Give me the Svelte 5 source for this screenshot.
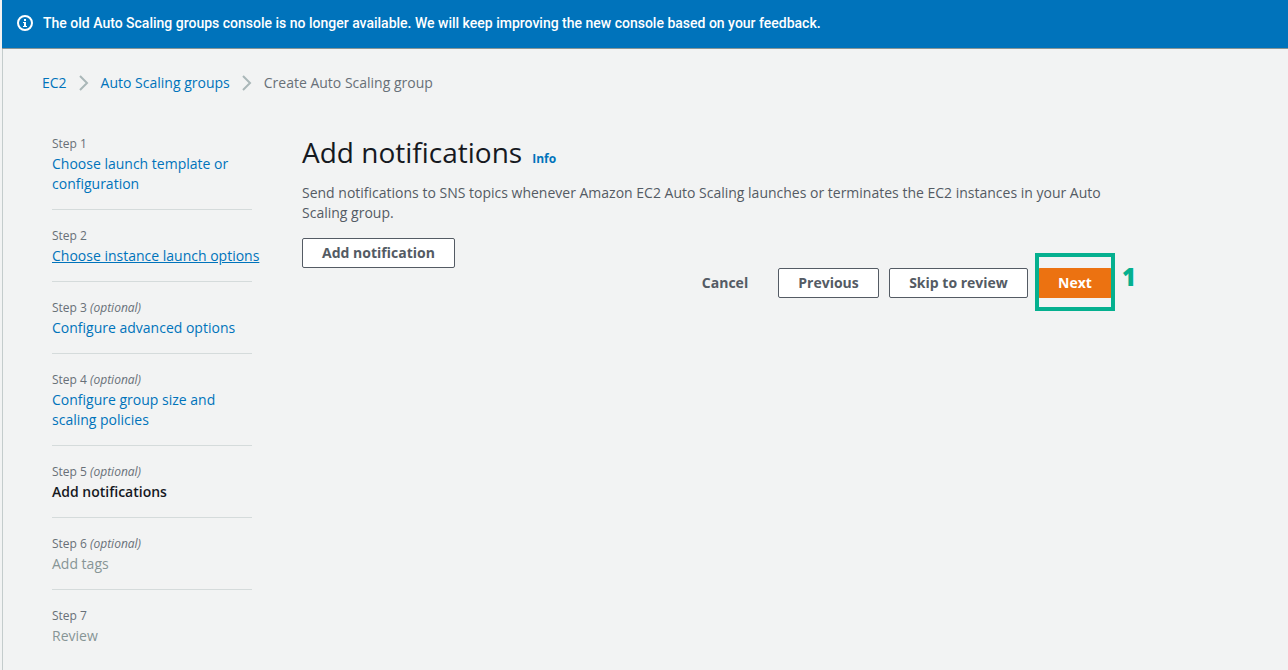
<script>
  const steps = [
    { label: 'Step 1', title: 'Choose launch template or configuration', state: 'link' },
    { label: 'Step 2', title: 'Choose instance launch options', state: 'link hovered' },
    { label: 'Step 3', optional: true, title: 'Configure advanced options', state: 'link' },
    { label: 'Step 4', optional: true, title: 'Configure group size and scaling policies', state: 'link' },
    { label: 'Step 5', optional: true, title: 'Add notifications', state: 'current' },
    { label: 'Step 6', optional: true, title: 'Add tags', state: 'disabled' },
    { label: 'Step 7', title: 'Review', state: 'disabled' }
  ];
</script>

{#snippet chevron()}
  <svg class="chevron" width="10" height="16" viewBox="0 0 10 16" aria-hidden="true">
    <path d="M1 1l7 7-7 7" fill="none" stroke="#aab7b8" stroke-width="2" />
  </svg>
{/snippet}

<div class="page">
  <div class="banner" role="status">
    <svg width="16" height="16" viewBox="0 0 16 16" aria-hidden="true">
      <circle cx="8" cy="8" r="7" fill="none" stroke="#fff" stroke-width="2" />
      <path d="M7 4h2v2H7zM6 7h3v4h1v1H6v-1h1V8H6z" fill="#fff" />
    </svg>
    <span>The old Auto Scaling groups console is no longer available. We will keep improving the new console based on your feedback.</span>
  </div>

  <div class="body">
    <nav class="crumbs" aria-label="Breadcrumbs">
      <a href="#ec2">EC2</a>
      {@render chevron()}
      <a href="#groups">Auto Scaling groups</a>
      {@render chevron()}
      <span>Create Auto Scaling group</span>
    </nav>

    <div class="wizard">
      <nav class="steps" aria-label="Steps">
        <ol>
          {#each steps as step}
            <li>
              <div class="label">{step.label}{#if step.optional}{' '}<i>(optional)</i>{/if}</div>
              {#if step.state.startsWith('link')}
                <a href="#step" class={step.state}>{step.title}</a>
              {:else}
                <span class={step.state}>{step.title}</span>
              {/if}
            </li>
          {/each}
        </ol>
      </nav>

      <main>
        <header>
          <h1>Add notifications</h1>
          <a class="info" href="#info">Info</a>
        </header>
        <p>Send notifications to SNS topics whenever Amazon EC2 Auto Scaling launches or terminates the EC2 instances in your Auto Scaling group.</p>
        <button class="add" type="button">Add notification</button>
        <div class="actions">
          <button class="cancel" type="button">Cancel</button>
          <button class="previous" type="button">Previous</button>
          <button class="skip" type="button">Skip to review</button>
          <div class="marked">
            <button class="next" type="button">Next</button>
            <div class="frame"></div>
            <span class="number">1</span>
          </div>
        </div>
      </main>
    </div>
  </div>
</div>

<style>
  :global(body) {
    margin: 0;
    background: #f2f3f3;
  }
  .page {
    box-sizing: border-box;
    min-height: 100vh;
    padding-left: 2px;
    display: flex;
    flex-direction: column;
    background: #f2f3f3;
    color: #545b64;
    font: 14px/20px "Open Sans", "Noto Sans", sans-serif;
  }
  a {
    color: #0073bb;
    text-decoration: none;
  }
  a:hover {
    text-decoration: underline;
  }
  .banner {
    display: flex;
    align-items: center;
    gap: 10px;
    padding: 13px 15px 15px;
    background: #0073bb;
    border-bottom: 1px solid #879596;
    color: #fff;
    font-family: Roboto, sans-serif;
    font-weight: 500;
  }
  .banner svg {
    flex: none;
  }
  .body {
    flex: 1;
    padding: 24px 39px 0;
    border-left: 1px solid #c4cccc;
  }
  .crumbs {
    display: flex;
    align-items: center;
    gap: 12px;
    color: #687078;
  }
  .wizard {
    display: flex;
    gap: 50px;
    padding: 41px 10px 0;
  }
  .steps {
    flex: 0 0 200px;
    min-width: 0;
  }
  ol {
    margin: 0;
    padding: 0;
    list-style: none;
  }
  li {
    padding-bottom: 15px;
  }
  li + li {
    padding-top: 16px;
    border-top: 1px solid #d5dbdb;
  }
  li:last-child {
    padding-bottom: 0;
  }
  li > a,
  li > span {
    display: block;
  }
  .label {
    color: #687078;
    font-size: 12px;
  }
  .hovered {
    text-decoration: underline;
    white-space: nowrap;
  }
  .current {
    color: #16191f;
    font-weight: 600;
  }
  .disabled {
    color: #879596;
  }
  main {
    flex: 1;
    max-width: 810px;
  }
  header {
    display: flex;
    align-items: baseline;
    gap: 10px;
  }
  h1 {
    margin: 0;
    color: #16191f;
    font-size: 28px;
    font-weight: 400;
    line-height: 36px;
  }
  .info {
    font-size: 12px;
    font-weight: 700;
  }
  p {
    margin: 13px 0 15px;
  }
  button {
    box-sizing: border-box;
    height: 30px;
    padding: 0;
    border: 1px solid #545b64;
    border-radius: 2px;
    background: #fff;
    color: #545b64;
    font: inherit;
    font-weight: 700;
    line-height: 20px;
    text-align: center;
    cursor: pointer;
  }
  .add {
    display: block;
    min-width: 153px;
  }
  .actions {
    display: flex;
    justify-content: flex-end;
    gap: 10px;
  }
  .cancel {
    min-width: 86px;
    border-color: transparent;
    background: transparent;
  }
  .previous {
    min-width: 101px;
  }
  .skip {
    min-width: 139px;
  }
  .marked {
    position: relative;
  }
  .next {
    min-width: 74px;
    border-color: #ec7211;
    background: #ec7211;
    color: #fff;
  }
  .frame {
    position: absolute;
    inset: -15px -3px -13px;
    border: 4px solid #05b08f;
    pointer-events: none;
  }
  .number {
    position: absolute;
    left: 84px;
    top: -6px;
    color: #05b08f;
    font-family: "Noto Sans", sans-serif;
    font-size: 24px;
    font-weight: 900;
    line-height: 30px;
  }
</style>
